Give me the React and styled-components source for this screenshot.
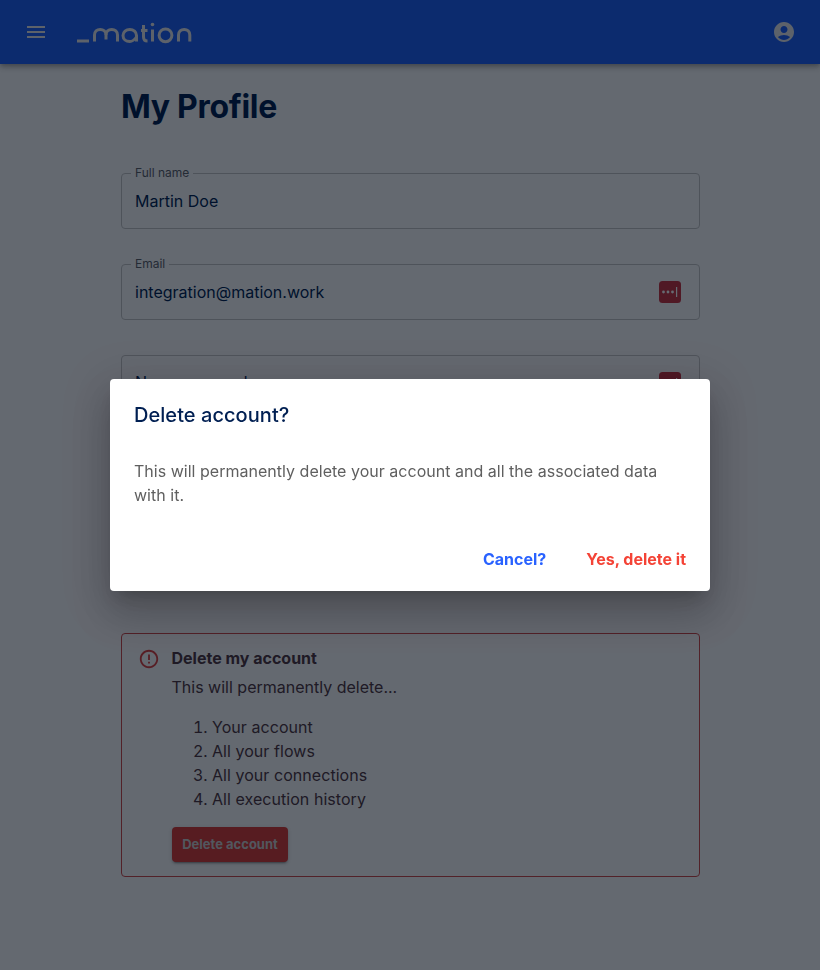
import React from 'react';
import styled, {createGlobalStyle} from 'styled-components';
import {MdAccountCircle, MdMenu, MdErrorOutline} from 'react-icons/md';

const GlobalStyle = createGlobalStyle`
  html, body {
    margin: 0;
    padding: 0;
  }
  body {
    background: #fafafa;
    font-family: Inter, "Liberation Sans", sans-serif;
    color: #001f52;
    overflow: hidden;
  }
`;

function Logo() {
    return (
        <svg width="116" height="24" viewBox="0 0 116 24" fill="none" stroke="#e8e9ec" strokeWidth="3">
            <path d="M1 21H13"/>
            <path d="M18.5 21.5V15C18.5 11.5 21 9.4 24.2 9.4S30 11.5 30 15V19.5"/>
            <path d="M30 15C30 11.5 32.5 9.4 35.7 9.4S41.5 11.5 41.5 15V21.5"/>
            <path d="M60.5 21.5V15.5C60.5 12 57.5 9.4 53.8 9.4S47 12 47 15.5 50 21.5 53.8 21.5C56 21.5 58 20.5 60.5 17"/>
            <path d="M67.5 5V17C67.5 19.8 69 21 71.5 21"/>
            <path d="M65 10.5H71.5"/>
            <path d="M76.5 9.5V21.5"/>
            <circle cx="76.5" cy="4.5" r="1.8" fill="#e8e9ec" stroke="none"/>
            <circle cx="89.5" cy="15.3" r="6.4"/>
            <path d="M102.5 21.5V15C102.5 11.5 105 9.4 108.2 9.4S113.8 11.5 113.8 15V21.5"/>
        </svg>
    );
}

function PassIcon() {
    return (
        <svg width="22" height="22" viewBox="0 0 22 22">
            <rect width="22" height="22" rx="3.5" fill="#c73240"/>
            <circle cx="4.5" cy="11" r="1.4" fill="#fff"/>
            <circle cx="9" cy="11" r="1.4" fill="#fff"/>
            <circle cx="13.5" cy="11" r="1.4" fill="#fff"/>
            <rect x="17" y="6" width="1.2" height="10" fill="#fff"/>
        </svg>
    );
}

function App() {
    return (
        <>
            <GlobalStyle/>
            <Header>
                <MenuButton><MdMenu/></MenuButton>
                <Logo/>
                <Spacer/>
                <UserButton><MdAccountCircle/></UserButton>
            </Header>
            <Main>
                <Title>My Profile</Title>
                <Field>
                    <Legend>Full name</Legend>
                    <Value>Martin Doe</Value>
                </Field>
                <Field>
                    <Legend>Email</Legend>
                    <Value>integration@mation.work</Value>
                    <PassIcon/>
                </Field>
                <Field>
                    <Placeholder>New password</Placeholder>
                    <PassIcon/>
                </Field>
                <Field>
                    <PassIcon/>
                </Field>
                <UpdateButton/>
                <DangerBox>
                    <DangerIcon><MdErrorOutline/></DangerIcon>
                    <DangerBody>
                        <DangerTitle>Delete my account</DangerTitle>
                        <DangerText>This will permanently delete...</DangerText>
                        <DangerList>
                            <li>Your account</li>
                            <li>All your flows</li>
                            <li>All your connections</li>
                            <li>All execution history</li>
                        </DangerList>
                        <DeleteButton>Delete account</DeleteButton>
                    </DangerBody>
                </DangerBox>
            </Main>
            <Backdrop>
                <Dialog>
                    <DialogTitle>Delete account?</DialogTitle>
                    <DialogText>This will permanently delete your account and all the associated data with it.</DialogText>
                    <DialogActions>
                        <TextButton $color="#2962ff">Cancel?</TextButton>
                        <TextButton $color="#f44336">Yes, delete it</TextButton>
                    </DialogActions>
                </Dialog>
            </Backdrop>
        </>
    );
}

const Header = styled.header`
  height: 64px;
  background: #2060f5;
  display: flex;
  align-items: center;
  padding: 0 24px;
  box-sizing: border-box;
  box-shadow: 0 2px 4px -1px rgba(0,0,0,.2), 0 4px 5px rgba(0,0,0,.14), 0 1px 10px rgba(0,0,0,.12);
`;
const MenuButton = styled.div`
  width: 24px;
  height: 24px;
  font-size: 24px;
  color: #e8e9ec;
  display: flex;
  margin-right: 28px;
`;
const Spacer = styled.div`
  flex: 1;
`;
const UserButton = styled.div`
  width: 24px;
  height: 24px;
  font-size: 24px;
  color: #e8e9ec;
  display: flex;
`;
const Main = styled.main`
  width: 579px;
  margin-left: 121px;
  display: flex;
  flex-direction: column;
`;
const Title = styled.h1`
  margin: 22px 0 45px;
  font-size: 32px;
  line-height: 42px;
  font-weight: 700;
  letter-spacing: -0.3px;
  color: #001f52;
`;
const Field = styled.div`
  position: relative;
  height: 56px;
  box-sizing: border-box;
  border: 1px solid #c4c4c4;
  border-radius: 4px;
  display: flex;
  align-items: center;
  justify-content: space-between;
  padding: 0 18px 0 13px;
  margin-bottom: 35px;

  svg:only-child {
    margin-left: auto;
  }
`;
const Legend = styled.span`
  position: absolute;
  top: -8px;
  left: 9px;
  padding: 0 4px;
  background: #fafafa;
  font-size: 12px;
  line-height: 14px;
  color: #5a5f68;
`;
const Value = styled.span`
  font-size: 16px;
  color: #001f52;
`;
const Placeholder = styled(Value)`
  margin-bottom: 2px;
`;
const UpdateButton = styled.div`
  height: 36px;
  border-radius: 4px;
  background: #2060f5;
  margin-bottom: 60px;
`;
const DangerBox = styled.section`
  display: flex;
  box-sizing: border-box;
  height: 244px;
  border: 1px solid #cc4a4a;
  border-radius: 4px;
  padding: 14px 16px;
  color: #4f3640;
`;
const DangerIcon = styled.div`
  font-size: 22px;
  width: 22px;
  height: 22px;
  color: #d9403f;
  margin-right: 12px;
`;
const DangerBody = styled.div`
  display: flex;
  flex-direction: column;
  align-items: flex-start;
`;
const DangerTitle = styled.div`
  font-size: 16px;
  font-weight: 700;
  line-height: 20px;
  margin-left: -0.5px;
`;
const DangerText = styled.div`
  font-size: 16px;
  line-height: 24px;
  margin-top: 7px;
  margin-left: -0.5px;
`;
const DangerList = styled.ol`
  margin: 16px 0;
  padding-left: 40px;
  font-size: 16px;
  line-height: 24px;
  letter-spacing: 0.05px;
`;
const DeleteButton = styled.button`
  height: 35px;
  width: 116px;
  padding: 0 0 2px;
  border: 0;
  border-radius: 4px;
  background: #d93a35;
  color: #ccc;
  font: 700 13px Inter, sans-serif;
  box-shadow: 0 3px 1px -2px rgba(0,0,0,.2), 0 2px 2px rgba(0,0,0,.14), 0 1px 5px rgba(0,0,0,.12);
`;
const Backdrop = styled.div`
  position: fixed;
  inset: 0;
  background: rgba(0, 8, 20, 0.6);
  display: flex;
  align-items: center;
  justify-content: center;
`;
const Dialog = styled.div`
  width: 600px;
  height: 212px;
  box-sizing: border-box;
  background: #fff;
  border-radius: 4px;
  display: flex;
  flex-direction: column;
  box-shadow: 0 11px 15px -7px rgba(0,0,0,.2), 0 24px 38px 3px rgba(0,0,0,.14), 0 9px 46px 8px rgba(0,0,0,.12);
`;
const DialogTitle = styled.h2`
  margin: 0;
  padding: 20px 24px 28px;
  font-size: 20px;
  line-height: 32px;
  font-weight: 500;
  letter-spacing: 0.05px;
  color: #001f52;
`;
const DialogText = styled.p`
  margin: 0;
  padding: 0 24px;
  font-size: 16px;
  line-height: 24px;
  letter-spacing: 0.02px;
  color: #5f5f5f;
  flex: 1;
`;
const DialogActions = styled.div`
  display: flex;
  justify-content: flex-end;
  gap: 40px;
  padding: 0 24px 20px;
`;
const TextButton = styled.button`
  background: none;
  border: 0;
  padding: 0;
  font: 700 16px/24px Inter, sans-serif;
  color: ${p => p.$color};
`;

export default App;
